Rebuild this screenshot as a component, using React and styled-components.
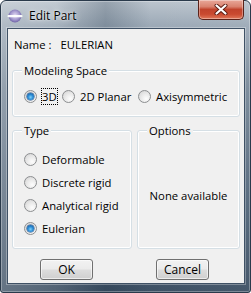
import React from "react";
import styled, { createGlobalStyle } from "styled-components";

const GlobalStyle = createGlobalStyle`
  html, body {
    margin: 0;
    padding: 0;
    background: #ffffff;
  }
  * {
    box-sizing: border-box;
  }
`;

const AppIcon = () => (
  <svg width="16" height="16" viewBox="0 0 16 16">
    <defs>
      <radialGradient id="orb" cx="50%" cy="45%" r="55%">
        <stop offset="0%" stopColor="#e4dcf4" />
        <stop offset="60%" stopColor="#a79bd0" />
        <stop offset="100%" stopColor="#6e63a6" />
      </radialGradient>
    </defs>
    <circle cx="8" cy="8" r="6.5" fill="url(#orb)" />
    <rect x="0.5" y="7" width="15" height="2.2" rx="1" fill="#ffffff" opacity="0.95" />
  </svg>
);

const CloseGlyph = () => (
  <svg width="14" height="11" viewBox="0 0 14 11">
    <path
      d="M2.5 1.5 L11.5 9.5 M11.5 1.5 L2.5 9.5"
      stroke="#5a1a10"
      strokeWidth="4"
      strokeLinecap="round"
      fill="none"
    />
    <path
      d="M2.5 1.5 L11.5 9.5 M11.5 1.5 L2.5 9.5"
      stroke="#ffffff"
      strokeWidth="2.2"
      strokeLinecap="round"
      fill="none"
    />
  </svg>
);

const Radio = ({ label, checked, focused, width }) => (
  <RadioItem $width={width}>
    <RadioCircle $checked={checked} />
    <RadioLabel $focused={focused}>{label}</RadioLabel>
  </RadioItem>
);

const App = () => {
  return (
    <>
      <GlobalStyle />
      <Window>
        <TitleBar>
          <IconSlot>
            <AppIcon />
          </IconSlot>
          <Title>Edit Part</Title>
          <CloseButton>
            <CloseGlyph />
          </CloseButton>
        </TitleBar>
        <Client>
          <NameRow>
            Name :<NameValue>EULERIAN</NameValue>
          </NameRow>
          <Group $height={47} $top={17}>
            <Legend>Modeling Space</Legend>
            <SpaceRow>
              <Radio label="3D" checked focused width={38} />
              <Radio label="2D Planar" width={76} />
              <Radio label="Axisymmetric" />
            </SpaceRow>
          </Group>
          <Columns>
            <Group $height={119}>
              <Legend>Type</Legend>
              <TypeList>
                <Radio label="Deformable" />
                <Radio label="Discrete rigid" />
                <Radio label="Analytical rigid" />
                <Radio label="Eulerian" checked />
              </TypeList>
            </Group>
            <Group $height={119}>
              <Legend>Options</Legend>
              <EmptyNote>None available</EmptyNote>
            </Group>
          </Columns>
          <ButtonRow>
            <Button>OK</Button>
            <Button>Cancel</Button>
          </ButtonRow>
        </Client>
      </Window>
    </>
  );
};

const Window = styled.div`
  width: 251px;
  height: 293px;
  border: 1px solid #2a3a4b;
  border-radius: 6px 6px 3px 3px;
  background:
    linear-gradient(
      90deg,
      rgba(255, 255, 255, 0.2) 0%,
      rgba(255, 255, 255, 0.1) 22%,
      rgba(20, 40, 60, 0.22) 42%,
      rgba(255, 255, 255, 0) 60%,
      rgba(255, 255, 255, 0.04) 100%
    ),
    linear-gradient(
      180deg,
      #bcc5ce 0%,
      #9eabb8 8%,
      #7a8a9a 30%,
      #5d6f82 60%,
      #3e5165 100%
    );
  box-shadow: inset 0 0 0 1px rgba(255, 255, 255, 0.3);
  display: flex;
  flex-direction: column;
  font-family: "Segoe UI", "Open Sans", "Noto Sans", sans-serif;
  font-size: 11.3px;
  color: #000;
`;

const TitleBar = styled.div`
  height: 27px;
  display: flex;
  align-items: center;
  padding-left: 6px;
`;

const IconSlot = styled.div`
  width: 16px;
  height: 16px;
  display: flex;
  margin-top: 2px;
`;

const Title = styled.span`
  margin-left: 6px;
  margin-top: 2px;
  font-size: 12px;
  text-shadow: 0 0 6px rgba(255, 255, 255, 0.9), 0 0 2px rgba(255, 255, 255, 0.8);
`;

const CloseButton = styled.div`
  margin-left: auto;
  margin-right: 6px;
  align-self: flex-start;
  margin-top: -1px;
  width: 46px;
  height: 20px;
  border: 1px solid #5b2219;
  border-top: none;
  border-radius: 0 0 5px 5px;
  background: linear-gradient(
    180deg,
    #e9a89a 0%,
    #d9826f 35%,
    #c1432c 50%,
    #c94a30 75%,
    #e0785a 100%
  );
  box-shadow: inset 0 0 0 1px rgba(255, 255, 255, 0.35);
  display: flex;
  align-items: center;
  justify-content: center;
`;

const Client = styled.div`
  margin: 0 5px 0 6px;
  height: 256px;
  background: #f0f0f0;
  border: 1px solid #3f5165;
  box-shadow: 0 0 0 1px rgba(255, 255, 255, 0.3);
  display: flex;
  flex-direction: column;
  padding: 0 4px;
`;

const NameRow = styled.div`
  margin: 8px 0 0 2px;
  height: 16px;
  line-height: 16px;
  display: flex;
`;

const NameValue = styled.span`
  margin-left: 9px;
`;

const Group = styled.div`
  position: relative;
  flex-shrink: 0;
  height: ${(p) => p.$height}px;
  margin-top: ${(p) => p.$top || 0}px;
  border: 1px solid #d5dfe5;
  border-radius: 3px;
  box-shadow: inset 0 0 0 1px #ffffff;
`;

const Legend = styled.span`
  position: absolute;
  top: -8px;
  left: 9px;
  padding: 0 2px;
  line-height: 15px;
  background: #f0f0f0;
`;

const SpaceRow = styled.div`
  display: flex;
  align-items: center;
  padding: 17px 0 0 11px;
`;

const RadioItem = styled.div`
  display: flex;
  align-items: center;
  height: 17px;
  width: ${(p) => (p.$width ? `${p.$width}px` : "auto")};
  flex-shrink: 0;
`;

const RadioCircle = styled.span`
  position: relative;
  width: 13px;
  height: 13px;
  border-radius: 50%;
  border: 1px solid #8c8e90;
  background: radial-gradient(circle at 65% 70%, #fdfdfd 0%, #e6e6e6 55%, #cfcfcf 100%);
  flex-shrink: 0;

  &::after {
    content: "";
    display: ${(p) => (p.$checked ? "block" : "none")};
    position: absolute;
    left: 2px;
    top: 2px;
    width: 7px;
    height: 7px;
    border-radius: 50%;
    background: radial-gradient(circle at 50% 60%, #7fd3fb 0%, #2b8ad3 45%, #0d4d93 100%);
    box-shadow: 0 0 0 0.5px #1b4a80;
  }
`;

const RadioLabel = styled.span`
  margin-left: ${(p) => (p.$focused ? "4px" : "5px")};
  line-height: 15px;
  border: ${(p) => (p.$focused ? "1px dotted #000" : "none")};
  white-space: nowrap;
`;

const Columns = styled.div`
  display: grid;
  grid-template-columns: 120px 1fr;
  gap: 5px;
  margin-top: 13px;
`;

const TypeList = styled.div`
  display: flex;
  flex-direction: column;
  gap: 6px;
  padding: 20px 0 0 11px;
`;

const EmptyNote = styled.div`
  height: 100%;
  display: flex;
  align-items: center;
  justify-content: center;
  padding-top: 12px;
`;

const ButtonRow = styled.div`
  display: flex;
  gap: 63px;
  padding-left: 28px;
  margin-top: 10px;
`;

const Button = styled.div`
  width: 53px;
  height: 21px;
  border: 1px solid #707070;
  border-radius: 3px;
  background: linear-gradient(180deg, #f2f2f2 0%, #ebebeb 48%, #dddddd 52%, #cfcfcf 100%);
  box-shadow: inset 0 0 0 1px rgba(255, 255, 255, 0.6);
  display: flex;
  align-items: center;
  justify-content: center;
  font-size: 12px;
`;

export default App;
